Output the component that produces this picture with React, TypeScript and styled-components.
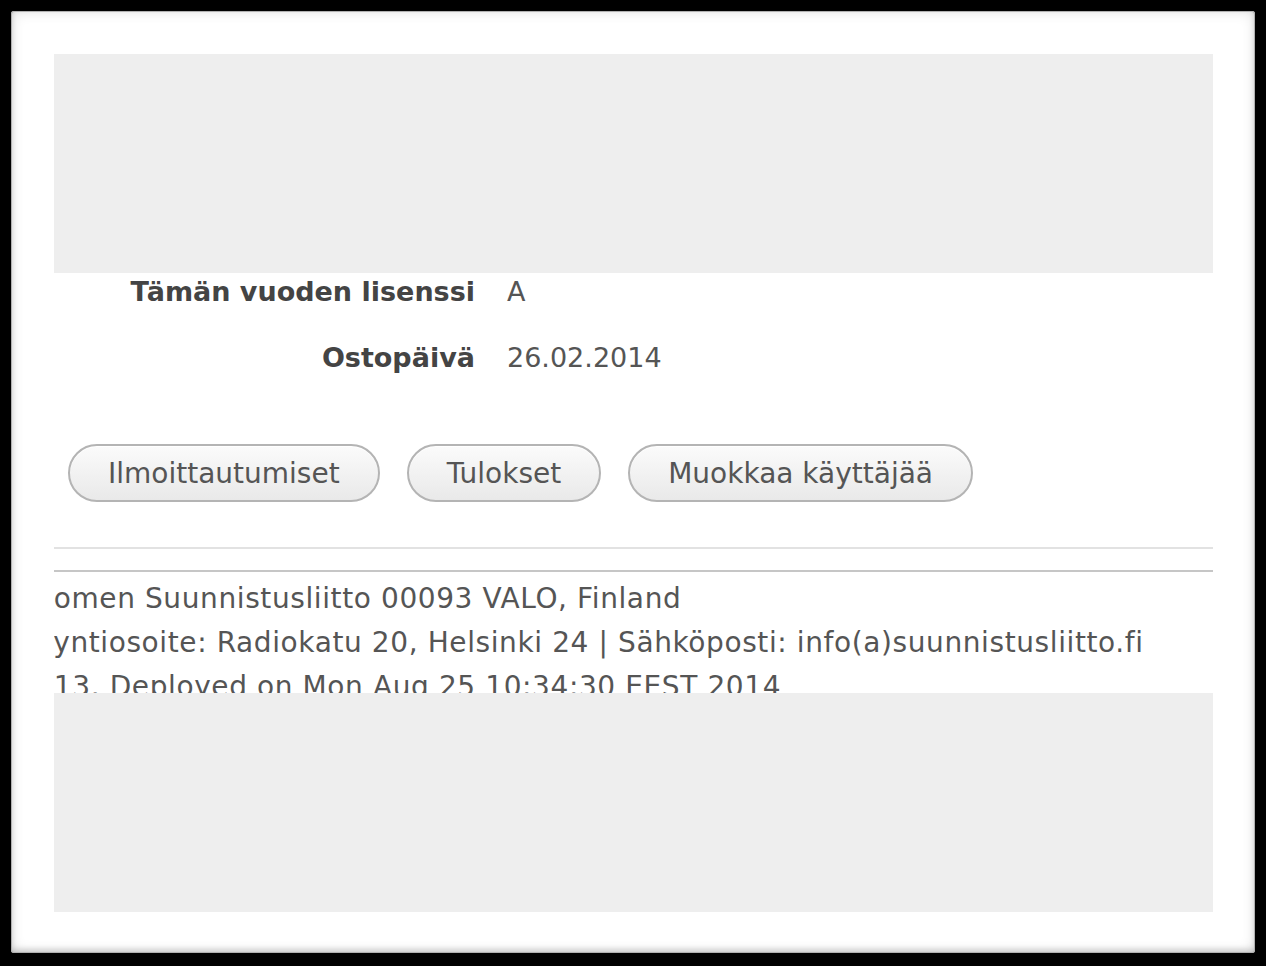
import React from 'react';
import styled, { createGlobalStyle } from 'styled-components';

const GlobalStyle = createGlobalStyle`
  html, body {
    margin: 0;
    padding: 0;
    background: #000;
  }
  body {
    font-family: "DejaVu Sans", Verdana, sans-serif;
  }
`;

const Frame = styled.div`
  width: 1266px;
  height: 966px;
  box-sizing: border-box;
  padding: 11px 11px 13px 11px;
  background: #000;
`;

const Card = styled.div`
  height: 100%;
  box-sizing: border-box;
  background: #fff;
  border-radius: 3px;
  padding: 43px 42px 41px 43px;
  box-shadow: inset 0 0 0 1px #b0b0b0, inset 0 -3px 6px rgba(0, 0, 0, 0.18),
    inset 0 0 14px rgba(0, 0, 0, 0.14);
  display: flex;
  flex-direction: column;
`;

const Placeholder = styled.div`
  height: 219px;
  flex: none;
  background: #eeeeee;
`;

const Middle = styled.div`
  flex: 1;
  display: flex;
  flex-direction: column;
  overflow: hidden;
`;

const InfoGrid = styled.dl`
  margin: 0;
  display: grid;
  grid-template-columns: 421px auto;
  column-gap: 32px;
  row-gap: 28px;
  font-size: 27px;
  line-height: 38px;
`;

const Label = styled.dt`
  text-align: right;
  font-weight: bold;
  color: #444;
`;

const Value = styled.dd`
  margin: 0;
  color: #555;
`;

const ButtonRow = styled.div`
  display: flex;
  gap: 27px;
  padding-left: 14px;
  margin-top: 67px;
`;

const Button = styled.button`
  height: 58px;
  padding: 0 38px;
  border-radius: 29px;
  border: 2px solid #b4b4b4;
  background: linear-gradient(#fbfbfb, #e9e9e9);
  box-shadow: inset 0 1px 0 #fff;
  color: #555;
  font-family: inherit;
  font-size: 28px;
  cursor: pointer;
`;

const Rule = styled.div<{ $tone: string; $gap: number }>`
  height: 2px;
  margin-top: ${p => p.$gap}px;
  background: ${p => p.$tone};
  flex: none;
`;

const Footer = styled.div`
  margin-left: -37px;
  padding-top: 5px;
  white-space: nowrap;
  font-size: 28px;
  letter-spacing: 0.6px;
  line-height: 44px;
  color: #555;
`;

const buttons = ['Ilmoittautumiset', 'Tulokset', 'Muokkaa käyttäjää'];

const footerLines = [
  'Suomen Suunnistusliitto 00093 VALO, Finland',
  'Käyntiosoite: Radiokatu 20, Helsinki 24 | Sähköposti: info(a)suunnistusliitto.fi',
  '2013. Deployed on Mon Aug 25 10:34:30 EEST 2014',
];

export default function App() {
  return (
    <Frame>
      <GlobalStyle />
      <Card>
        <Placeholder />
        <Middle>
          <InfoGrid>
            <Label>Tämän vuoden lisenssi</Label>
            <Value>A</Value>
            <Label>Ostopäivä</Label>
            <Value>26.02.2014</Value>
          </InfoGrid>
          <ButtonRow>
            {buttons.map(b => (
              <Button key={b}>{b}</Button>
            ))}
          </ButtonRow>
          <Rule $tone="#e2e2e2" $gap={45} />
          <Rule $tone="#c6c6c6" $gap={21} />
          <Footer>
            {footerLines.map(l => (
              <div key={l}>{l}</div>
            ))}
          </Footer>
        </Middle>
        <Placeholder />
      </Card>
    </Frame>
  );
}
